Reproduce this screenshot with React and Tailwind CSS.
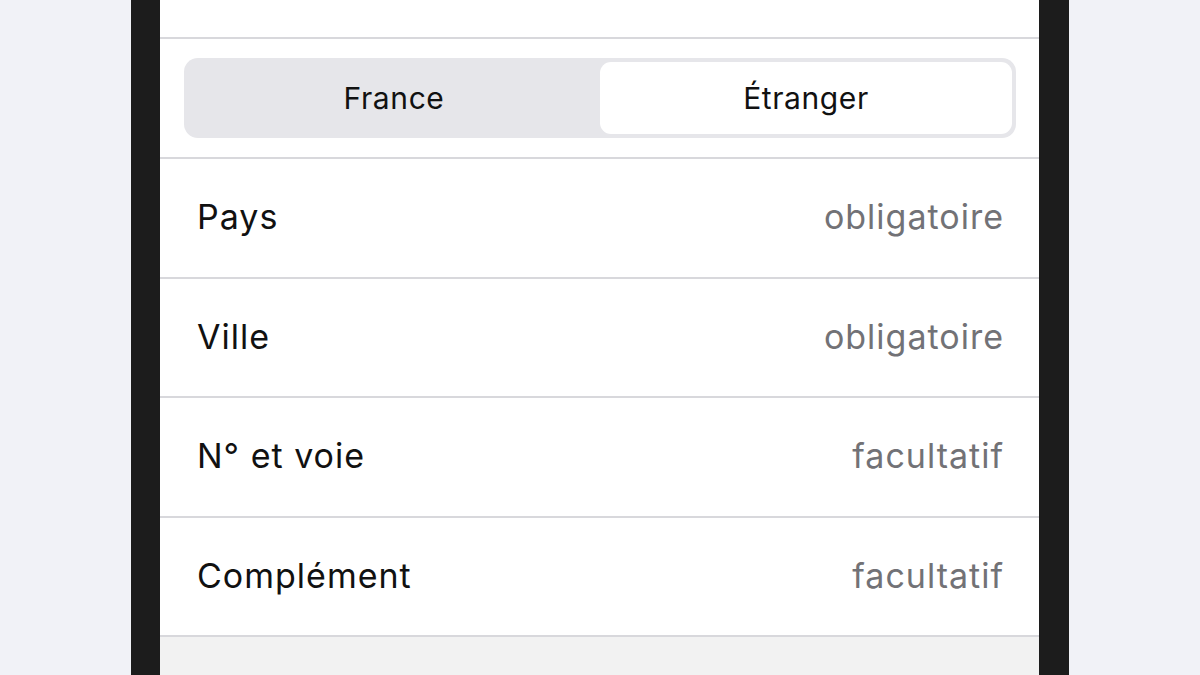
import React from "react";

const rows = [
  ["Pays", "obligatoire"],
  ["Ville", "obligatoire"],
  ["N° et voie", "facultatif"],
  ["Complément", "facultatif"],
];

export default function App() {
  return (
    <div
      className="w-[1200px] h-[675px] overflow-hidden bg-[#f1f2f7] flex justify-center"
      style={{ fontFamily: "Inter, 'Noto Sans', sans-serif" }}
    >
      <div className="w-[938px] h-full bg-[#1c1c1c] pl-[29px] pr-[30px]">
        <div className="h-full bg-white flex flex-col">
          <div className="h-[39px] shrink-0 border-b-2 border-[#d8d8dc]" />
          <div className="h-[120px] shrink-0 border-b-2 border-[#d8d8dc] pl-[24px] pr-[23px] flex items-center">
            <div className="w-full h-[80px] rounded-[14px] bg-[#e6e6ea] p-[4px] flex">
              <div className="flex-1 flex items-center justify-center text-[30px] text-[#111] tracking-[0.6px]">
                France
              </div>
              <div className="flex-1 flex items-center justify-center rounded-[11px] bg-white text-[30px] text-[#111] tracking-[0.6px]">
                Étranger
              </div>
            </div>
          </div>
          {rows.map(([label, hint]) => (
            <div
              key={label}
              className="h-[119.5px] shrink-0 border-b-2 border-[#d8d8dc] pl-[37px] pr-[35px] flex items-center justify-between"
            >
              <span className="text-[34px] text-[#111] tracking-[1px] -translate-y-[1px]">{label}</span>
              <span className="text-[34px] text-[#727276] tracking-[1px] -translate-y-[1px]">{hint}</span>
            </div>
          ))}
          <div className="flex-1 bg-[#f2f2f2]" />
        </div>
      </div>
    </div>
  );
}
